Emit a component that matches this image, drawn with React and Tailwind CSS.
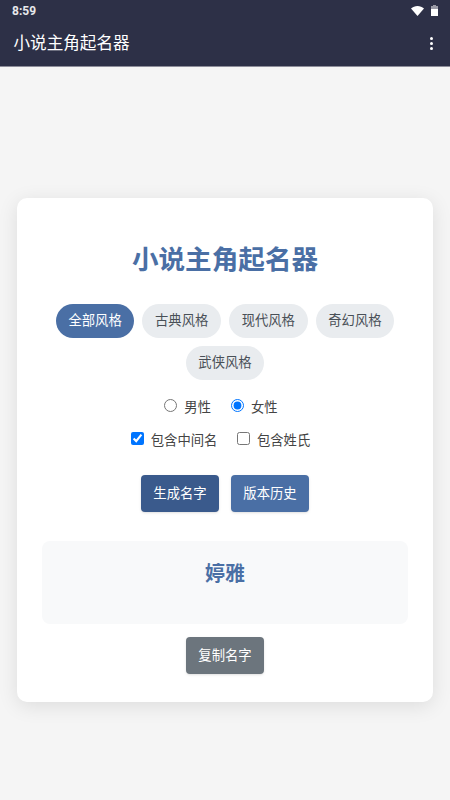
const FONT = { fontFamily: '"Liberation Sans","Noto Sans CJK SC",sans-serif' };

function Chip({ label, active }) {
  return (
    <span className={`flex h-[34px] w-[78.6px] items-center justify-center rounded-[17px] text-[13.33px] ${active ? "bg-[#4a6fa5] text-white" : "bg-[#e9ecef] text-[#495057]"}`}>
      {label}
    </span>
  );
}

function Btn({ label, bg }) {
  return (
    <span className={`flex h-[37px] w-[78px] items-center justify-center rounded-[4px] text-[13.33px] text-white shadow-sm ${bg}`}>
      {label}
    </span>
  );
}

export default function App() {
  return (
    <div style={FONT} className="min-h-[800px] w-[450px] bg-[#f5f5f5] text-[#333333]">
      <header className="h-[67px] border-b border-[#8d8d9a] bg-[#2d3047] text-white">
        <div className="flex h-[21px] items-center justify-between pl-3 pr-[12px]">
          <span className="text-[12px] font-bold leading-none text-[#e8e8ec]" style={{ fontFamily: "Roboto, sans-serif" }}>8:59</span>
          <span className="flex items-center gap-[7px]">
            <svg width="13" height="10" viewBox="0 0 13 10"><path d="M0 2.6C1.8 1 4 0 6.5 0S11.2 1 13 2.6L6.5 10z" fill="#fff" /></svg>
            <svg width="7" height="11" viewBox="0 0 7 11"><path d="M2 0h3v1h2v10H0V1h2z" fill="#fff" /><path d="M2 0h3v1h2v3H0V1h2z" fill="#9a9aa6" /></svg>
          </span>
        </div>
        <div className="flex h-[45px] items-center justify-between pl-[13.5px] pr-[17px]">
          <span className="mt-[2px] text-[16.6px]">小说主角起名器</span>
          <span className="flex flex-col gap-[2px]">
            <i className="block size-[3px] rounded-full bg-white" />
            <i className="block size-[3px] rounded-full bg-white" />
            <i className="block size-[3px] rounded-full bg-white" />
          </span>
        </div>
      </header>
      <main className="px-[17px] pt-[131px]">
        <section className="h-[504px] w-[416px] rounded-[10px] bg-white px-[25px] pt-[44px] shadow-[0_4px_20px_rgba(0,0,0,0.1)]">
          <h1 className="text-center text-[26.6px] font-bold leading-[36px] text-[#4a6fa5]">小说主角起名器</h1>
          <div className="mt-[26px] flex flex-wrap justify-center gap-x-2 gap-y-2">
            <Chip label="全部风格" active />
            <Chip label="古典风格" />
            <Chip label="现代风格" />
            <Chip label="奇幻风格" />
            <Chip label="武侠风格" />
          </div>
          <div className="mt-[18px] flex h-[20px] items-center justify-center gap-[20px] pr-[8px] text-[13.33px] text-[#444444]">
            <label className="flex items-center gap-[7px]"><input type="radio" name="g" readOnly className="m-0 mb-[4px] size-[13px] appearance-auto" />男性</label>
            <label className="flex items-center gap-[7px]"><input type="radio" name="g" defaultChecked className="m-0 mb-[4px] size-[13px] appearance-auto" />女性</label>
          </div>
          <div className="mt-[13px] flex h-[20px] items-center justify-center gap-[19.5px] pr-[9px] text-[13.33px] text-[#444444]">
            <label className="flex items-center gap-[7px]"><input type="checkbox" defaultChecked className="m-0 mb-[4px] size-[13px] appearance-auto" />包含中间名</label>
            <label className="flex items-center gap-[7px]"><input type="checkbox" className="m-0 mb-[4px] size-[13px] appearance-auto" />包含姓氏</label>
          </div>
          <div className="mt-[24px] flex justify-center gap-[12px]">
            <Btn label="生成名字" bg="bg-[#3a5a8c]" />
            <Btn label="版本历史" bg="bg-[#4a6fa5]" />
          </div>
          <div className="mt-[29px] h-[83px] rounded-[8px] bg-[#f8f9fa] pt-[17px] text-center text-[20px] font-bold leading-[32px] text-[#4a6fa5]">婷雅</div>
          <div className="mt-[13px] flex justify-center">
            <Btn label="复制名字" bg="bg-[#6c757d]" />
          </div>
        </section>
      </main>
    </div>
  );
}
